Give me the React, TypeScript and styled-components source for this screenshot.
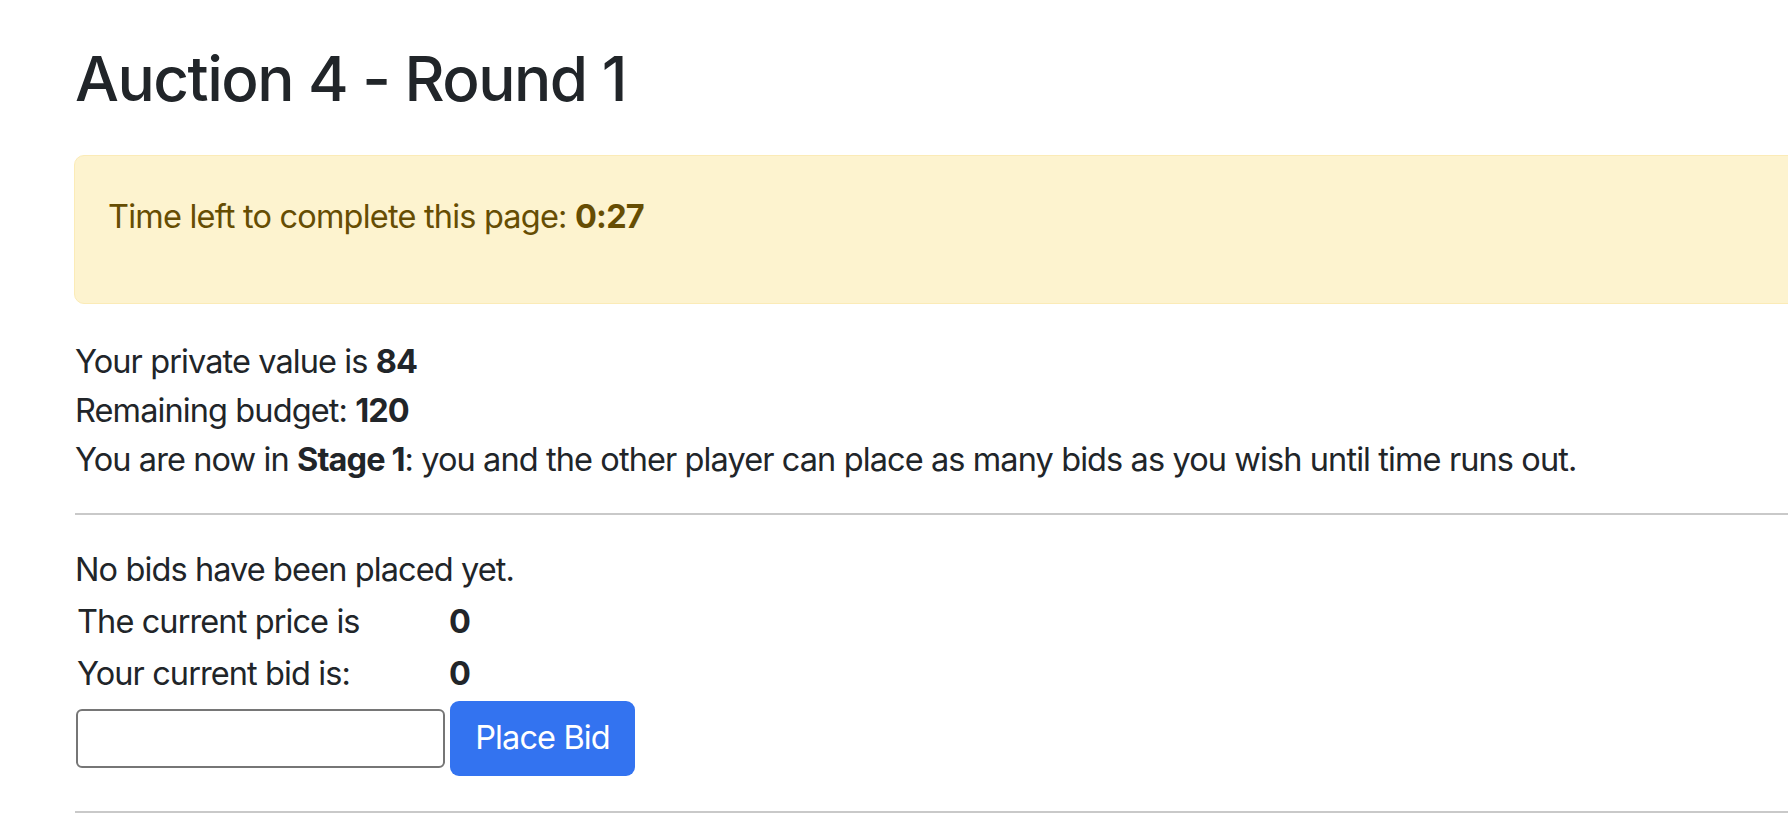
import React from "react";
import styled, { createGlobalStyle } from "styled-components";

const GlobalStyle = createGlobalStyle`
  html, body {
    margin: 0;
    padding: 0;
    background: #ffffff;
    overflow: hidden;
  }
  body {
    font-family: Inter, "Liberation Sans", Arial, sans-serif;
    color: #212529;
  }
  * { box-sizing: border-box; }
`;

const Page = styled.div`
  width: 1788px;
  overflow: hidden;
  padding: 42px 0 0 75px;
`;

const Container = styled.div`
  width: 1800px;
  font-size: 32.5px;
  line-height: 48.75px;
  letter-spacing: -0.9px;
`;

const Title = styled.h2`
  margin: 0 0 39px 0;
  font-size: 62px;
  font-weight: 500;
  line-height: 1.2;
  letter-spacing: -1.5px;
  color: #212529;
`;

const Alert = styled.div`
  margin: 0 0 34.5px -1px;
  padding: 36.5px 33px 32.5px 33px;
  background: #fdf3cf;
  border: 1px solid #fbebb7;
  border-radius: 10px;
  color: #664d03;
  letter-spacing: -0.8px;
`;

const AlertText = styled.p`
  margin: 0 0 28.5px 0;
`;

const Line = styled.div`
  margin: 0;
`;

const Rule = styled.hr`
  margin: 29px 0 31px 0;
  border: 0;
  border-top: 2px solid #c9c9c9;
  height: 0;
`;

const BidTable = styled.div`
  display: grid;
  grid-template-columns: 374px auto;
  align-items: start;
`;

const Label = styled.div`
  padding: 2.5px 0 0 2px;
  height: 52px;
`;

const Value = styled.div`
  padding-top: 2.5px;
  height: 52px;
  font-weight: 700;
`;

const FormRow = styled.div`
  display: flex;
  align-items: center;
  gap: 5px;
  padding-top: 1.5px;
`;

const BidInput = styled.input`
  width: 369px;
  height: 59px;
  margin: 0 0 0 1px;
  border: 2px solid #767676;
  border-radius: 6px;
  background: #ffffff;
  font-family: inherit;
  font-size: 27px;
  padding: 2px 8px;
`;

const BidButton = styled.button`
  width: 185px;
  height: 75px;
  border: 0;
  border-radius: 9px;
  background: #3373f0;
  color: #ffffff;
  font-family: inherit;
  font-size: 32.5px;
  letter-spacing: -0.9px;
  line-height: 48.75px;
  padding: 0;
  cursor: pointer;
`;

const BottomRule = styled(Rule)`
  margin-top: 35px;
`;

export default function App() {
  return (
    <>
      <GlobalStyle />
      <Page>
        <Container>
          <Title>Auction 4 - Round 1</Title>
          <Alert>
            <AlertText>
              Time left to complete this page: <b>0:27</b>
            </AlertText>
          </Alert>
          <Line>
            Your private value is <b>84</b>
          </Line>
          <Line>
            Remaining budget: <b>120</b>
          </Line>
          <Line>
            You are now in <b>Stage 1</b>: you and the other player can place as many bids as you wish until time runs out.
          </Line>
          <Rule />
          <Line>No bids have been placed yet.</Line>
          <BidTable>
            <Label>The current price is</Label>
            <Value>0</Value>
            <Label>Your current bid is:</Label>
            <Value>0</Value>
          </BidTable>
          <FormRow>
            <BidInput type="text" />
            <BidButton type="button">Place Bid</BidButton>
          </FormRow>
          <BottomRule />
        </Container>
      </Page>
    </>
  );
}
